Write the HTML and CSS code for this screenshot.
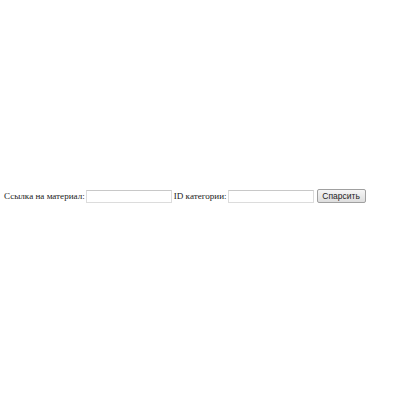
FILE: index.html
```html
<!DOCTYPE html>
<html>
<head>
<meta charset="utf-8">
<link rel="stylesheet" href="styles.css">
</head>
<body>
<div class="page">
  <form class="form">
    <label class="lbl">Ссылка на материал:</label>
    <input class="field" type="text">
    <label class="lbl">ID категории:</label>
    <input class="field" type="text">
    <button class="btn" type="button">Спарсить</button>
  </form>
</div>
</body>
</html>
```

FILE: styles.css
```css
html, body {
  margin: 0;
  padding: 0;
  background: #fff;
}
.page {
  height: 400px;
  display: flex;
  align-items: center;
  padding-left: 4px;
  box-sizing: border-box;
}
.form {
  display: flex;
  align-items: center;
  font-family: "Liberation Serif", "DejaVu Serif", serif;
  font-size: 9.1px;
  color: #222;
  margin-top: -8px;
}
.lbl {
  margin-right: 1px;
}
.field {
  width: 86px;
  height: 13px;
  box-sizing: border-box;
  border: 1px solid #dcdcdc;
  border-top-color: #c8c8c8;
  background: #fff;
  padding: 0;
  margin: 0 2px 0 0;
}
.btn {
  width: 49px;
  height: 14px;
  box-sizing: border-box;
  margin-left: 1px;
  padding: 0;
  font-family: "Liberation Sans", Arial, sans-serif;
  font-size: 8.5px;
  color: #222;
  background: linear-gradient(#f6f6f6, #dedede);
  border: 1px solid #a0a0a0;
  border-radius: 2px;
}
```
